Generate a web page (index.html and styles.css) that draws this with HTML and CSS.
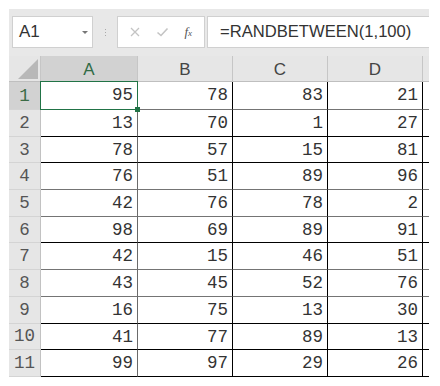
FILE: index.html
```html
<!DOCTYPE html>
<html lang="ja">
<head>
    <meta charset="UTF-8">
    <title>Sheet</title>
    <link rel="stylesheet" href="styles.css">
</head>
<body>
    <div class="sheet">
        <div class="toolbar">
            <div class="name-box">
                <span>A1</span>
                <span class="drop"></span>
            </div>
            <div class="grip"><i></i><i></i><i></i></div>
            <div class="fx-box">
                <svg class="ico" width="12" height="12" viewBox="0 0 12 12"><path d="M2 2 L10 10 M10 2 L2 10" stroke="#c4c4c4" stroke-width="1.3" fill="none"/></svg>
                <svg class="ico" width="13" height="12" viewBox="0 0 13 12"><path d="M1.5 6.5 L5 9.5 L11.5 2.5" stroke="#c4c4c4" stroke-width="1.6" fill="none"/></svg>
                <span class="fx">f<small>x</small></span>
            </div>
            <div class="formula">=RANDBETWEEN(1,100)</div>
        </div>

        <div class="row head">
            <div class="rh corner"><span class="tri"></span></div>
            <div class="c colA sel">A</div>
            <div class="c">B</div>
            <div class="c">C</div>
            <div class="c">D</div>
            <div class="c colE"></div>
        </div>

        <div class="row first gray">
            <div class="rh sel">1</div>
            <div class="c colA active">95</div>
            <div class="c">78</div>
            <div class="c">83</div>
            <div class="c">21</div>
            <div class="c colE"></div>
        </div>
        <div class="row">
            <div class="rh">2</div>
            <div class="c colA">13</div>
            <div class="c">70</div>
            <div class="c">1</div>
            <div class="c">27</div>
            <div class="c colE"></div>
        </div>
        <div class="row">
            <div class="rh">3</div>
            <div class="c colA">78</div>
            <div class="c">57</div>
            <div class="c">15</div>
            <div class="c">81</div>
            <div class="c colE"></div>
        </div>
        <div class="row gray">
            <div class="rh">4</div>
            <div class="c colA">76</div>
            <div class="c">51</div>
            <div class="c">89</div>
            <div class="c">96</div>
            <div class="c colE"></div>
        </div>
        <div class="row gray">
            <div class="rh">5</div>
            <div class="c colA">42</div>
            <div class="c">76</div>
            <div class="c">78</div>
            <div class="c">2</div>
            <div class="c colE"></div>
        </div>
        <div class="row">
            <div class="rh">6</div>
            <div class="c colA">98</div>
            <div class="c">69</div>
            <div class="c">89</div>
            <div class="c">91</div>
            <div class="c colE"></div>
        </div>
        <div class="row gray">
            <div class="rh">7</div>
            <div class="c colA">42</div>
            <div class="c">15</div>
            <div class="c">46</div>
            <div class="c">51</div>
            <div class="c colE"></div>
        </div>
        <div class="row gray">
            <div class="rh">8</div>
            <div class="c colA">43</div>
            <div class="c">45</div>
            <div class="c">52</div>
            <div class="c">76</div>
            <div class="c colE"></div>
        </div>
        <div class="row">
            <div class="rh">9</div>
            <div class="c colA">16</div>
            <div class="c">75</div>
            <div class="c">13</div>
            <div class="c">30</div>
            <div class="c colE"></div>
        </div>
        <div class="row">
            <div class="rh">10</div>
            <div class="c colA">41</div>
            <div class="c">77</div>
            <div class="c">89</div>
            <div class="c">13</div>
            <div class="c colE"></div>
        </div>
        <div class="row">
            <div class="rh">11</div>
            <div class="c colA">99</div>
            <div class="c">97</div>
            <div class="c">29</div>
            <div class="c">26</div>
            <div class="c colE"></div>
        </div>
    </div>
</body>
</html>
```

FILE: styles.css
```css
body {
    margin: 0;
    background: #fff;
    font-family: "Liberation Sans", Arial, sans-serif;
}
.sheet {
    width: 420px;
    margin: 9px 0 0 9px;
}

/* toolbar */
.toolbar {
    display: flex;
    align-items: center;
    height: 47px;
    padding: 0 0 1px 3px;
    box-sizing: border-box;
    background: #e8e8e8;
}
.name-box {
    width: 81px;
    height: 32px;
    box-sizing: border-box;
    border: 1px solid #d0d0d0;
    background: #fff;
    display: flex;
    align-items: center;
    justify-content: space-between;
    padding: 0 4px 0 6px;
    font-size: 17px;
    color: #333;
}
.drop {
    width: 0;
    height: 0;
    border-left: 3px solid transparent;
    border-right: 3px solid transparent;
    border-top: 3px solid #777;
}
.grip {
    width: 24px;
    display: flex;
    flex-direction: column;
    align-items: center;
    gap: 2px;
}
.grip i {
    width: 1px;
    height: 1px;
    background: #aaa;
}
.fx-box {
    width: 88px;
    height: 32px;
    box-sizing: border-box;
    border: 1px solid #d0d0d0;
    background: #fff;
    display: flex;
    align-items: center;
    justify-content: space-between;
    padding: 0 12px 0 11px;
}
.fx {
    font-family: "Liberation Serif", serif;
    font-style: italic;
    font-size: 13px;
    color: #555;
}
.fx small {
    font-size: 9px;
}
.formula {
    flex: 1;
    margin-left: 2px;
    height: 32px;
    box-sizing: border-box;
    border: 1px solid #d0d0d0;
    border-right: none;
    background: #fff;
    padding-left: 12px;
    font-size: 16.6px;
    line-height: 30px;
    color: #333;
}

/* grid */
.row {
    display: flex;
    height: 26.7px;
}
.row.first {
    height: 28px;
}
.row.head {
    height: 26px;
}
.rh, .c {
    box-sizing: border-box;
    height: 100%;
}
.rh {
    width: 32px;
    background: #e6e6e6;
    border-right: 1px solid #c2c2c2;
    border-bottom: 1px solid #d4d4d4;
    font-family: "Liberation Mono", monospace;
    font-size: 17.5px;
    color: #555;
    display: flex;
    align-items: center;
    justify-content: center;
}
.rh.sel {
    background: #d2d2d2;
    color: #3b6b45;
}
.c {
    width: 95px;
    border-right: 1px solid #000;
    border-bottom: 1px solid #000;
    font-family: "Liberation Mono", monospace;
    font-size: 17.5px;
    color: #333;
    text-align: right;
    padding: 3px 4px 0 0;
}
.c.colA {
    width: 97px;
    border-right-color: #6a6a6a;
}
.c.colE {
    width: 6px;
    border-right: none;
}
.row.gray .c {
    border-bottom-color: #747474;
}

.head .rh, .head .c {
    background: #e6e6e6;
    border-bottom: 1px solid #bfbfbf;
    border-right: 1px solid #c6c6c6;
    font-family: "Liberation Sans", Arial, sans-serif;
    font-size: 17px;
    color: #444;
    text-align: center;
    padding: 4px 0 0;
}
.head .c.sel {
    background: #d2d2d2;
    color: #2f6b45;
}
.head .c.colE {
    border-right: none;
}
.corner {
    position: relative;
}
.tri {
    position: absolute;
    right: 2px;
    bottom: 2px;
    width: 0;
    height: 0;
    border-left: 20px solid transparent;
    border-bottom: 20px solid #b8b8b8;
}

/* active cell */
.active {
    position: relative;
}
.active::after {
    content: "";
    position: absolute;
    left: -1px;
    top: -1px;
    right: -1px;
    bottom: -1px;
    border: 1px solid #217346;
}
.active::before {
    content: "";
    position: absolute;
    right: -3px;
    bottom: -3px;
    width: 5px;
    height: 5px;
    background: #217346;
    z-index: 1;
}
```
